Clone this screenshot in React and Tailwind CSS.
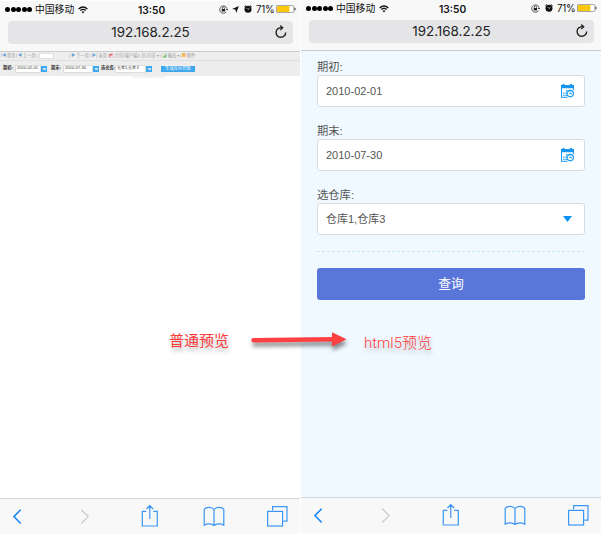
import clsx from 'clsx';

const Wifi = () => (
  <svg width="10" height="8" viewBox="0 0 10 8" fill="none" stroke="#111" strokeWidth="1.3">
    <path d="M.6 2.9Q5-.9 9.4 2.9M2.3 4.6Q5 2.2 7.7 4.6" />
    <path d="M3.6 5.8Q5 4.7 6.4 5.8L5 7.4z" fill="#111" stroke="none" />
  </svg>
);

const RotationLock = () => (
  <svg width="10" height="9" viewBox="0 0 10 9" fill="none" stroke="#333" strokeWidth=".8">
    <path d="M7.3 6.9A3.7 3.7 0 1 1 8 3.7" />
    <path d="M6.7 3.9h2.6L8 5.6z" fill="#333" stroke="none" />
    <rect x="2.7" y="4" width="3.4" height="2.5" fill="#222" stroke="none" />
    <path d="M3.3 4V3.2a1.1 1.1 0 0 1 2.2 0V4" />
  </svg>
);

const Location = () => (
  <svg width="7" height="7" viewBox="0 0 7 7">
    <path d="M6.9.1 4.2 6.9 3.4 3.6.1 2.900z" fill="#111" />
  </svg>
);

const Alarm = () => (
  <svg width="8" height="8" viewBox="0 0 8 8">
    <circle cx="4" cy="4.2" r="3.5" fill="#111" />
    <path d="M.3 2 2 .4M7.7 2 6 .4" stroke="#111" strokeWidth="1" />
    <path d="M2.8 3.2 4 4.4 5.4 3.4" stroke="#f8f8f8" strokeWidth=".7" fill="none" />
  </svg>
);

const Battery = () => (
  <svg width="20" height="8" viewBox="0 0 20 8">
    <rect x=".4" y=".4" width="17.4" height="7.2" rx="1.2" fill="#fff" stroke="#777" strokeWidth=".7" />
    <rect x="1" y="1" width="12.4" height="6" rx=".6" fill="#fdc70c" />
    <path d="M18.5 2.5q1.2.2 1.2 1.5t-1.2 1.5z" fill="#333" />
  </svg>
);

const Reload = () => (
  <svg width="12" height="13" viewBox="0 0 12 13" fill="none" stroke="#222" strokeWidth="1.4">
    <path d="M10.7 7.4A4.8 4.8 0 1 1 6 2.7h1.4" />
    <path d="M5.2.5 7.8 2.8 5.2 5.1" strokeWidth="1.2" />
  </svg>
);

const CalendarIcon = () => (
  <svg width="13" height="14" viewBox="0 0 13 14">
    <path d="M0 1h1.5V0h2v1h5.600V0h2v1H13v3.200H0z" fill="#1596f0" />
    <path d="M.5 4v9.300h6M12.400 4v2.200" stroke="#1596f0" fill="none" />
    <path d="M5 6h1.400v1.400H5zM2.200 8.400h1.400v1.400H2.200zM4.500 8.400h1.300v1.400H4.500zM2.200 10.800h1.400v1.300H2.200zM4.500 10.800h1.300v1.300H4.500z" fill="#1596f0" />
    <circle cx="9.200" cy="9.600" r="3.200" fill="#fff" stroke="#1596f0" strokeWidth="1.2" />
    <path d="M9 7.600v2.300h1.900" stroke="#1596f0" fill="none" />
  </svg>
);

const BottomBar = () => (
  <div className="h-9 shrink-0 border-t border-[#d4d7d9] bg-[#f8f8f8]">
    <svg width="300" height="35" viewBox="0 0 300 35" fill="none" stroke="#3b96f5" strokeWidth="1.2">
      <path d="M20.7 10.7 13.9 17.6 20.7 24.5" stroke="#1686f8" strokeWidth="1.5" />
      <path d="M81.3 10.7 88.1 17.6 81.3 24.5" stroke="#ccc" strokeWidth="1.3" />
      <path d="M146.3 12.3H142.3V27H157.3V12.3H153.3M149.8 20V6.8M146.5 10 149.8 6.6 153.1 10" />
      <path d="M214 10.5C212 8 206.5 7.3 204.2 10.3V26.2C207 24.3 211.5 24.3 214 26.5C216.5 24.3 221 24.3 223.8 26.2V10.3C221.5 7.3 216 8 214 10.5V26.5" />
      <path d="M272.6 11.5V7.7H287V22.2H283.3" />
      <rect x="267.6" y="12.4" width="15" height="14.6" />
    </svg>
  </div>
);

const Browser = ({ located, children, className }) => (
  <section className={clsx('flex w-[300px] flex-col overflow-hidden', className)}>
    <header className="h-[51px] shrink-0 border-b border-[#c9cccd] bg-[#f8f8f8]">
      <div className="flex h-[17px] items-center pr-[4px] pl-[5px] text-[10px] leading-none text-[#111]">
        <div className="flex gap-[0.5px]">
          {[0, 1, 2, 3, 4].map((n) => (
            <i key={n} className="size-[5px] rounded-full bg-black" />
          ))}
        </div>
        <span className="ml-[3px] w-[43px] text-[9.8px] whitespace-nowrap">中国移动</span>
        <Wifi />
        <span className="ml-[50px] w-[30px] pt-px text-[10.2px] font-semibold">13:50</span>
        <div className="ml-auto flex items-center">
          <RotationLock />
          {located && <span className="ml-[3px]"><Location /></span>}
          <span className={located ? 'ml-[5px]' : 'ml-[4px]'}><Alarm /></span>
          <span className="ml-[4px] w-[20px] pt-px text-[9.8px] tracking-[-0.3px]">71%</span>
          <Battery />
        </div>
      </div>
      <div className="mx-[8px] mt-[3px] flex h-[23px] w-[285px] items-center rounded-[4px] bg-[#e5e5e7] pr-[6px] text-[13.4px] text-[#222]">
        <span className="ml-[18px] flex-1 text-center">192.168.2.25</span>
        <span className="-mt-[2px]"><Reload /></span>
      </div>
    </header>
    <main className="flex-1 overflow-hidden">{children}</main>
    <BottomBar />
  </section>
);

const Sep = () => <i className="h-[4px] w-px bg-[#d2d2d2]" />;

const ToolItem = ({ icon, label, width, color = 'text-[#69a5d8]' }) => (
  <span className={clsx('flex shrink-0 items-center justify-center gap-px', width)}>
    <b className={clsx('text-[4.5px] font-normal', color)}>{icon}</b>
    {label}
  </span>
);

const TinyField = ({ label, value, labelWidth, width }) => (
  <div className="flex items-center">
    <span className={clsx('text-[4.2px] font-bold', labelWidth)}>{label}</span>
    <span className={clsx('flex h-[8px] items-center border border-[#ddd] bg-white pl-px font-[Liberation_Sans] text-[4.1px]', width)}>{value}</span>
    <i className="flex size-[6px] items-center justify-center bg-[#40a8ef]">
      <i className="h-[2px] w-[3px] bg-[#b9e0fb]" />
    </i>
  </div>
);

const DesktopPreview = () => (
  <div className="leading-none whitespace-nowrap">
    <div className="flex h-[9px] items-center border-b border-[#e0e0e0] bg-[#eeeeee] text-[4.2px] text-[#999]">
      <ToolItem icon="|◀" label="首页" width="w-[16px]" />
      <Sep />
      <ToolItem icon="◀" label="上一页" width="w-[19px]" />
      <Sep />
      <span className="mx-[2px] h-[6px] w-[15px] border border-[#ddd] bg-white" />
      <span className="w-[13px]" />
      <Sep />
      <ToolItem icon="▶" label="下一页" width="w-[20px]" />
      <Sep />
      <ToolItem icon="▶|" label="末页" width="w-[17px]" />
      <Sep />
      <ToolItem icon="◩" label="打印(客户端)" width="w-[30px]" color="text-[#e46a6a]" />
      <Sep />
      <ToolItem icon="▤" label="打印 ▾" width="w-[20px]" color="text-[#999]" />
      <Sep />
      <ToolItem icon="◪" label="输出 ▾" width="w-[19px]" color="text-[#70bb70]" />
      <Sep />
      <ToolItem icon="■" label="邮件" width="w-[15px]" color="text-[#f5b553]" />
    </div>
    <div className="flex h-[15px] items-center bg-[#ededed] pl-[3px] text-[#333]">
      <TinyField label="期初:" value="2010-02-01" labelWidth="w-[12px]" width="w-[26px]" />
      <span className="w-[4px]" />
      <TinyField label="期末:" value="2010-07-30" labelWidth="w-[12px]" width="w-[30px]" />
      <span className="w-[2px]" />
      <TinyField label="选仓库:" value="仓库1,仓库3" labelWidth="w-[14px]" width="w-[31px]" />
      <span className="ml-[9px] flex h-[6px] w-[34px] items-center justify-center bg-[#40a6ed] text-[4.3px] text-white">生成库存台账</span>
    </div>
    <div className="ml-[133px] h-[2px] w-[32px] bg-[#f3f3f3]" />
  </div>
);

const Field = ({ label, value, children }) => (
  <div className="mb-[16px] h-[48px]">
    <div className="h-[16px] text-[11.3px] leading-[16px] text-[#555]">{label}</div>
    <div className="flex h-[32px] items-center justify-between rounded-[3px] border border-[#d9dcde] bg-white pr-[10px] pl-[8px] text-[11px] text-[#555]">
      <span className="pt-px">{value}</span>
      {children}
    </div>
  </div>
);

const MobilePreview = () => (
  <div className="h-full bg-[#f0f9ff] px-4 pt-[8px] font-['Liberation_Sans','Noto_Sans_CJK_SC',sans-serif]">
    <Field label="期初:" value="2010-02-01"><CalendarIcon /></Field>
    <Field label="期末:" value="2010-07-30"><CalendarIcon /></Field>
    <Field label="选仓库:" value="仓库1,仓库3">
      <svg className="mr-[2px]" width="9" height="6" viewBox="0 0 9 6"><path d="M0 0h9L4.5 6z" fill="#0a93f0" /></svg>
    </Field>
    <div className="border-t border-dashed border-[#c8e8ee]" />
    <button className="mt-[16px] h-[32px] w-[268px] rounded-[3px] bg-[#5a76db] text-[12.8px] text-white">查询</button>
  </div>
);

const App = () => (
  <div className="relative flex h-[534px] w-[601px] gap-px overflow-hidden bg-white font-['Inter','Noto_Sans_CJK_SC',sans-serif]">
    <Browser located className="mt-px h-[533px] bg-white">
      <DesktopPreview />
    </Browser>
    <Browser className="h-[533px]">
      <MobilePreview />
    </Browser>

    {/* anotaciones sobre las dos pantallas */}
    <span className="absolute top-[330px] left-[169px] font-['Noto_Sans_CJK_SC',sans-serif] text-[15px] leading-[20px] whitespace-nowrap text-[#ff3b3b] [text-shadow:1px_4px_4px_#0004]">普通预览</span>
    <svg className="absolute top-[325px] left-[245px] overflow-visible drop-shadow-[1px_4px_2px_#0007]" width="106" height="28" viewBox="0 0 106 28">
      <path d="M8.5 15.2 90 14.3" stroke="#ff4040" strokeWidth="4.4" strokeLinecap="round" />
      <path d="M87 7.2 101.5 14.2 87 21.5z" fill="#ff4040" />
    </svg>
    <span className="absolute top-[333px] left-[364px] font-['Roboto','Noto_Sans_CJK_SC',sans-serif] text-[15px] leading-[20px] font-light whitespace-nowrap text-[#ff3b3b] [text-shadow:1px_4px_4px_#0004]">html5预览</span>
  </div>
);

export default App;
